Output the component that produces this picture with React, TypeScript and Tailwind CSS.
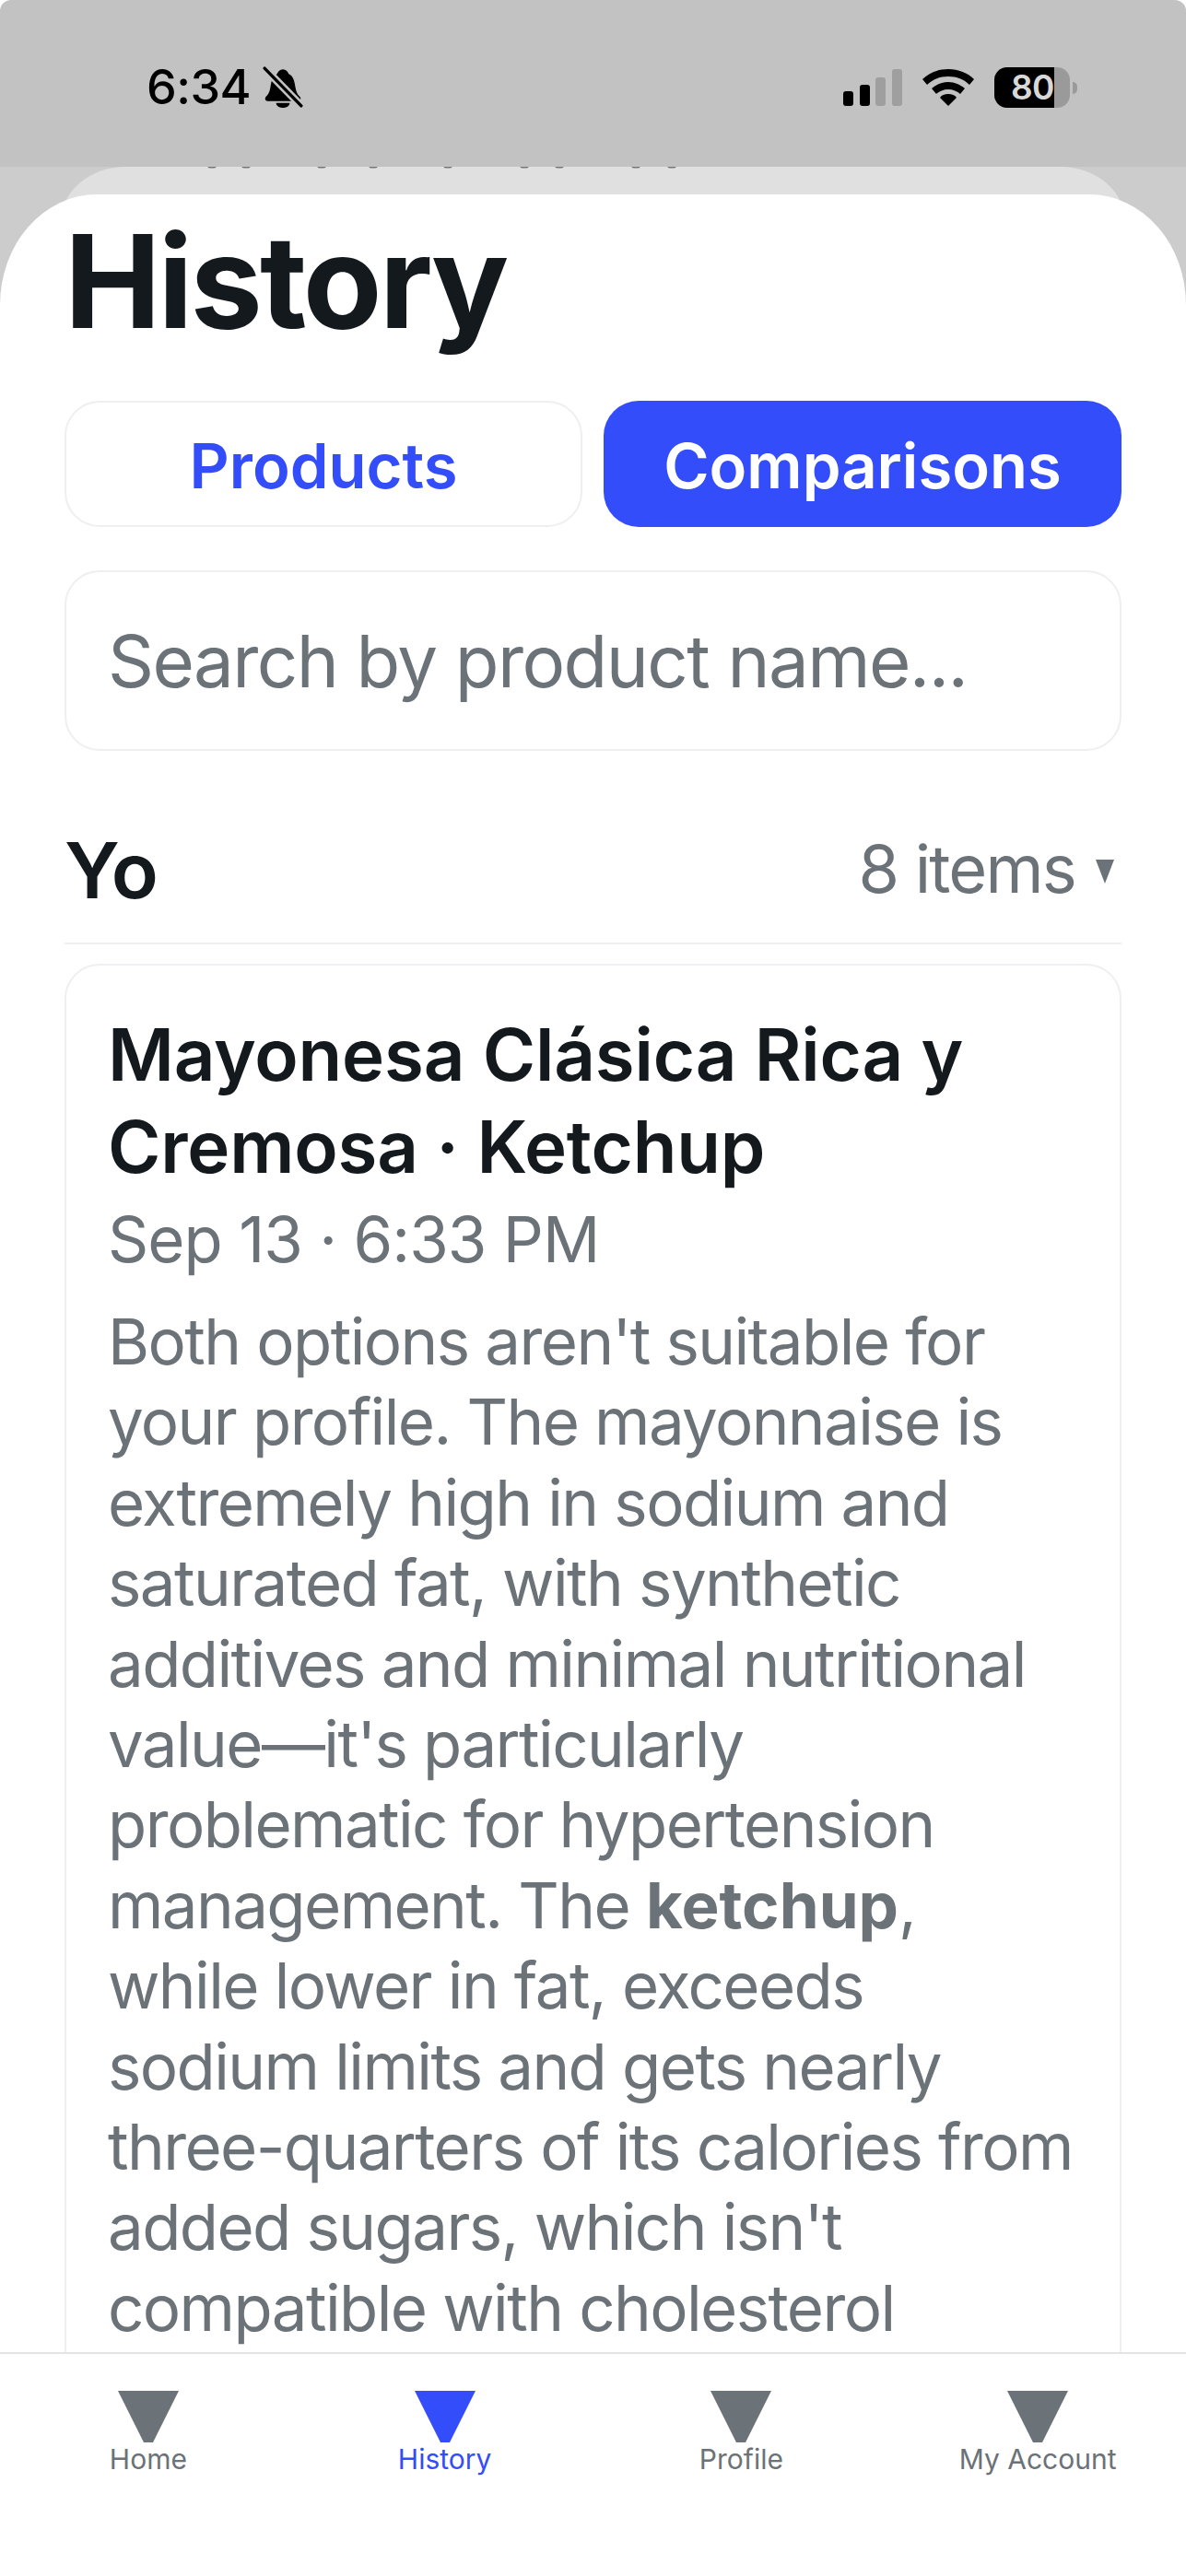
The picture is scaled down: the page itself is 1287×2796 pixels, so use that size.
import { ReactNode } from 'react';

const tabs = [
  { label: 'Home', active: false },
  { label: 'History', active: true },
  { label: 'Profile', active: false },
  { label: 'My Account', active: false },
];

// bottoms of the text cut off behind the status bar
const clippedMarks = [164, 201, 283, 339, 420, 503, 541, 624, 663];

function StatusBar() {
  return (
    <div className="h-[181px] shrink-0 bg-[#c2c2c2] rounded-t-[12px] flex items-start justify-between pt-[65px] pl-[159px] pr-[118px] text-black">
      <div className="flex items-center gap-[13px]">
        <span className="text-[52px] leading-[60px] font-medium tracking-[-0.5px]">6:34</span>
        <svg viewBox="0 0 42 44" className="w-[44px] h-[46px]">
          <path d="M21 3c3 0 5 2 6 5 5 2 6 8 7 14 1 5 2 7 5 10 1 2 0 4-2 4H5c-2 0-3-2-2-4 3-3 4-5 5-10 1-6 2-12 7-14 1-3 3-5 6-5z" fill="#000" />
          <path d="M14 38h14c0 3-3 5-7 5s-7-2-7-5z" fill="#000" />
          <path d="M2 2l38 39" stroke="#c2c2c2" strokeWidth="8" />
          <path d="M2 2l38 39" stroke="#000" strokeWidth="3.2" strokeLinecap="round" />
        </svg>
      </div>
      <div className="flex items-center gap-[22px] h-[60px]">
        <svg viewBox="0 0 64 40" className="w-[64px] h-[40px]">
          <rect x="0" y="24" width="11" height="16" rx="3" fill="#000" />
          <rect x="18" y="17" width="11" height="23" rx="3" fill="#000" />
          <rect x="35" y="9" width="11" height="31" rx="3" fill="#9f9f9f" />
          <rect x="53" y="0" width="11" height="40" rx="3" fill="#9f9f9f" />
        </svg>
        <svg viewBox="0 0 56 40" className="w-[56px] h-[40px]">
          <path d="M28 0c11 0 21 4 28 11l-5 6C45 11 37 8 28 8S11 11 5 17l-5-6C7 4 17 0 28 0z" fill="#000" />
          <path d="M28 14c7 0 13 3 18 7l-5 6c-3-3-8-5-13-5s-10 2-13 5l-5-6c5-4 11-7 18-7z" fill="#000" />
          <path d="M28 27c4 0 7 1 9 4l-9 9-9-9c2-3 5-4 9-4z" fill="#000" />
        </svg>
        <div className="flex items-center">
          <div className="w-[82px] h-[44px] rounded-[14px] overflow-hidden flex bg-[#9a9a9a]">
            <div className="w-[65px] bg-black text-[#d8d8d8] text-[37px] leading-[44px] font-semibold tracking-[-0.5px] text-right">
              80
            </div>
          </div>
          <div className="w-[5px] h-[13px] ml-[3px] rounded-r-full bg-[#9a9a9a]" />
        </div>
      </div>
    </div>
  );
}

function Bordered({ className, children }: { className: string; children: ReactNode }) {
  return <div className={`border-[2px] border-[#eeeff0] bg-white ${className}`}>{children}</div>;
}

export default function App() {
  return (
    <div className="w-[1287px] h-[2796px] bg-white overflow-hidden flex flex-col font-['Inter',sans-serif]">
      <StatusBar />

      <div className="flex-1 min-h-0 flex flex-col bg-[#cccccc]">
        {/* card of the screen underneath */}
        <div className="h-[60px] -mb-[30px] mx-[66px] shrink-0 rounded-t-[94px_80px] bg-[#e0e0e0] overflow-hidden">
          <svg viewBox="0 0 1155 3" className="block w-[1155px] h-[3px]">
            {clippedMarks.map((x) => (
              <ellipse key={x} cx={x} cy="0.5" rx="4.5" ry="1" fill="#777" />
            ))}
          </svg>
        </div>

        <div className="relative flex-1 min-h-0 flex flex-col bg-white rounded-t-[105px_120px] overflow-hidden">
          <div className="flex-1 min-h-0 overflow-hidden px-[70px]">
            <h1 className="mt-[19px] text-[140px] leading-[150px] font-bold tracking-[-3px] text-[#14191e]">History</h1>

            <div className="mt-[55px] grid grid-cols-2 gap-[23px]">
              <Bordered className="h-[137px] rounded-[38px] flex items-center justify-center pt-[6px] text-[67px] font-semibold text-[#344dfa]">
                Products
              </Bordered>
              <div className="h-[137px] rounded-[38px] bg-[#344dfa] flex items-center justify-center pt-[6px] text-[67px] font-semibold text-white">
                Comparisons
              </div>
            </div>

            <Bordered className="mt-[47px] h-[196px] rounded-[38px] flex items-center pl-[45px] text-[78px] tracking-[-1.6px] text-[#6b7278]">
              Search by product name...
            </Bordered>

            <div className="mt-[80px] h-[130px] flex items-start justify-between border-b-[2px] border-[#eeeff0]">
              <span className="text-[84px] leading-[100px] font-semibold tracking-[-1px] text-[#14191e]">Yo</span>
              <span className="flex items-center gap-[22px] pr-[8px] pt-[3px] text-[72px] leading-[90px] tracking-[-1.8px] text-[#6b7278]">
                8 items
                <svg viewBox="0 0 20 26" className="w-[20px] h-[26px] mt-[6px]">
                  <polygon points="0,0 20,0 10,26" fill="#6b7278" />
                </svg>
              </span>
            </div>

            <Bordered className="mt-[21px] rounded-[38px] px-[45px] pt-[47px] pb-[120px]">
              <h2 className="text-[78px] leading-[100px] font-semibold tracking-[-0.2px] text-[#14191e]">
                Mayonesa Clásica Rica y
                <br />
                Cremosa · Ketchup
              </h2>
              <p className="text-[69px] leading-[100px] tracking-[-1px] text-[#6b7278]">Sep 13 · 6:33 PM</p>
              <p className="mt-[18px] text-[69px] leading-[87.4px] tracking-[-1.6px] text-[#6b7278] whitespace-nowrap">
                Both options aren't suitable for
                <br />
                your profile. The mayonnaise is
                <br />
                extremely high in sodium and
                <br />
                saturated fat, with synthetic
                <br />
                additives and minimal nutritional
                <br />
                value—it's particularly
                <br />
                problematic for hypertension
                <br />
                management. The <b className="font-bold tracking-[0px]">ketchup</b>,
                <br />
                while lower in fat, exceeds
                <br />
                sodium limits and gets nearly
                <br />
                three-quarters of its calories from
                <br />
                added sugars, which isn't
                <br />
                compatible with cholesterol
              </p>
            </Bordered>
          </div>

          <nav className="h-[243px] shrink-0 bg-white border-t-[2px] border-[#e3e4e5] grid grid-cols-4 pt-[40px]">
            {tabs.map((t) => (
              <div key={t.label} className="flex flex-col items-center">
                <svg viewBox="0 0 66 56" className="w-[66px] h-[56px]">
                  <polygon points="0,0 66,0 38,56 28,56" fill={t.active ? '#344dfa' : '#6b7278'} />
                </svg>
                <span className={`text-[30px] leading-[36px] ${t.active ? 'text-[#344dfa]' : 'text-[#6b7278]'}`}>
                  {t.label}
                </span>
              </div>
            ))}
          </nav>
        </div>
      </div>
    </div>
  );
}
